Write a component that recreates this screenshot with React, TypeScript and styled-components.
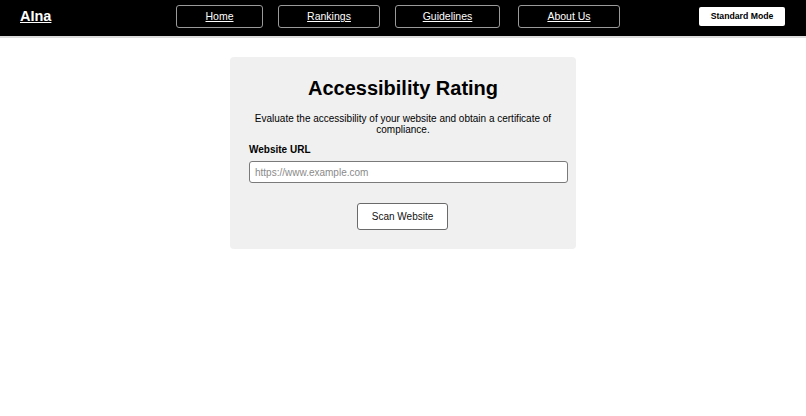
import styled, { createGlobalStyle } from 'styled-components';

const GlobalStyle = createGlobalStyle`
    body {
        margin: 0;
        background: #ffffff;
        font-family: "Liberation Sans", Arial, sans-serif;
        color: #000;
    }
`;

const Header = styled.header`
    height: 32px;
    padding: 0 21px 4px 20px;
    background: #000;
    border-bottom: 2px solid #dcdcdc;
    display: flex;
    align-items: center;
`;

const Logo = styled.a`
    color: #fff;
    font-size: 14.5px;
    font-weight: bold;
    text-decoration: underline;
    width: 156px;
`;

const Nav = styled.nav`
    display: flex;
    gap: 15px;
`;

const NavLink = styled.a<{ $width: number; $extra?: number }>`
    display: flex;
    align-items: center;
    justify-content: center;
    box-sizing: border-box;
    width: ${props => props.$width}px;
    height: 23px;
    margin-left: ${props => props.$extra ?? 0}px;
    border: 1px solid #9a9a9a;
    border-radius: 3px;
    color: #fff;
    font-size: 10.5px;
    text-decoration: underline;
`;

const ModeButton = styled.button`
    margin-left: auto;
    width: 86px;
    height: 19px;
    border: none;
    border-radius: 2px;
    background: #fff;
    color: #000;
    font-family: inherit;
    font-size: 8.7px;
    font-weight: bold;
`;

const Main = styled.main`
    display: flex;
    justify-content: center;
    padding-top: 19px;
`;

const Card = styled.section`
    width: 346px;
    box-sizing: border-box;
    background: #f0f0f0;
    border-radius: 4px;
    padding: 18px 9px 19px 19px;
    display: flex;
    flex-direction: column;
`;

const Title = styled.h1`
    margin: 0;
    font-size: 20px;
    font-weight: bold;
    text-align: center;
    line-height: 26px;
    padding-right: 10px;
`;

const Lead = styled.p`
    margin: 12px 0 0;
    font-size: 10px;
    line-height: 11px;
    text-align: center;
    padding-right: 10px;
`;

const Label = styled.label`
    margin-top: 8px;
    font-size: 10px;
    font-weight: bold;
    line-height: 13px;
`;

const Input = styled.input`
    margin-top: 5px;
    width: 319px;
    height: 22px;
    box-sizing: border-box;
    border: 1px solid #7a7a7a;
    border-radius: 3px;
    background: #fff;
    padding: 0 5px;
    font-family: inherit;
    font-size: 10px;
    &::placeholder {
        color: #8a8a8a;
    }
`;

const ScanButton = styled.button`
    align-self: flex-start;
    margin: 20px 0 0 108px;
    width: 91px;
    height: 27px;
    border: 1px solid #6a6a6a;
    border-radius: 3px;
    background: #fff;
    font-family: inherit;
    font-size: 10px;
    color: #111;
`;

const links = [
    { label: 'Home', width: 87 },
    { label: 'Rankings', width: 102 },
    { label: 'Guidelines', width: 105 },
    { label: 'About Us', width: 102, extra: 3 },
];

function App() {
    return (
        <>
            <GlobalStyle />
            <Header>
                <Logo href="#">AIna</Logo>
                <Nav>
                    {links.map(link => (
                        <NavLink key={link.label} href="#" $width={link.width} $extra={link.extra}>
                            {link.label}
                        </NavLink>
                    ))}
                </Nav>
                <ModeButton>Standard Mode</ModeButton>
            </Header>
            <Main>
                <Card>
                    <Title>Accessibility Rating</Title>
                    <Lead>Evaluate the accessibility of your website and obtain a certificate of compliance.</Lead>
                    <Label htmlFor="url">Website URL</Label>
                    <Input id="url" placeholder="https://www.example.com" />
                    <ScanButton>Scan Website</ScanButton>
                </Card>
            </Main>
        </>
    );
}

export default App;
